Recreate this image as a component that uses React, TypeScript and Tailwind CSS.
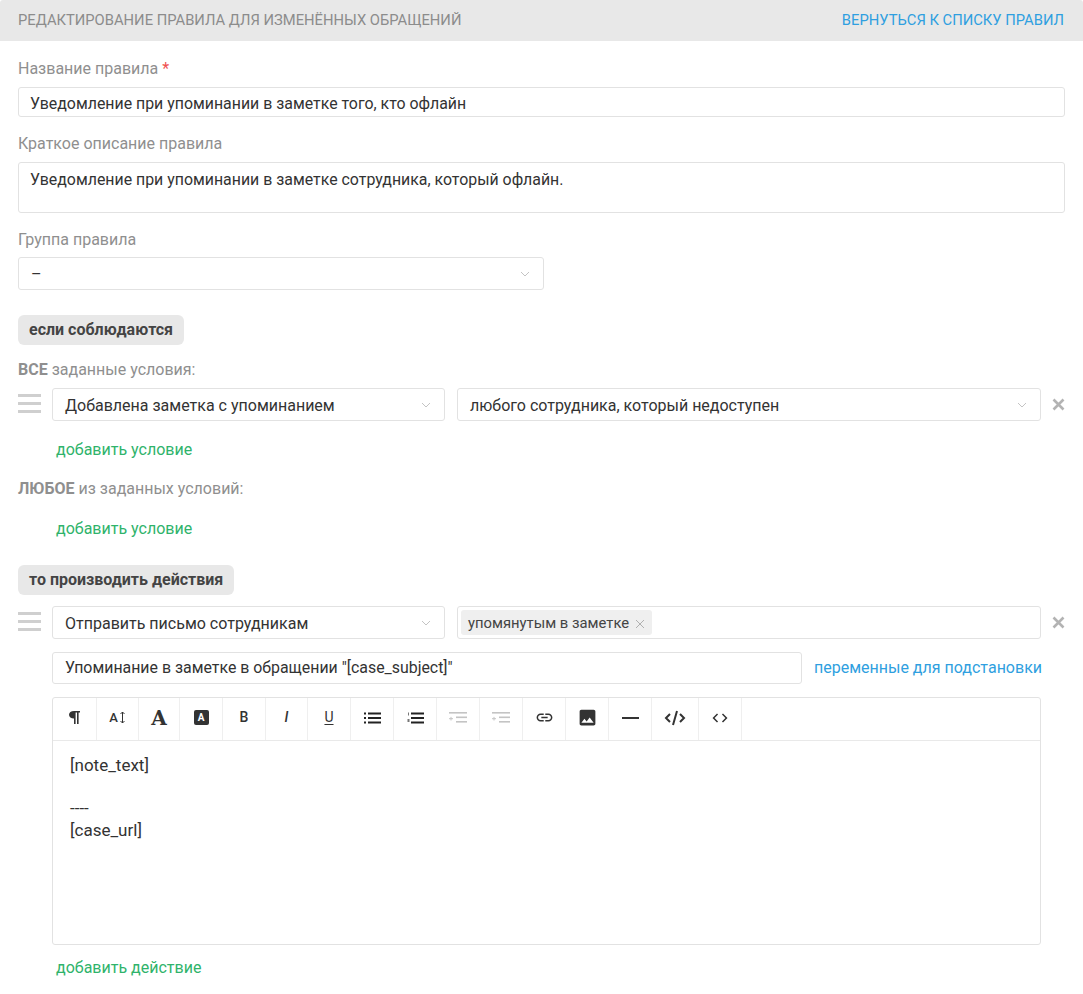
import { ReactNode } from 'react'
import { MdLink, MdImage, MdCode } from 'react-icons/md'

const font = { fontFamily: 'Roboto, sans-serif' }

function Chevron() {
  return (
    <svg width="10" height="6" viewBox="0 0 10 6" fill="none" className="shrink-0">
      <path d="M1 1l4 4 4-4" stroke="#c4c4c4" strokeWidth="1" />
    </svg>
  )
}

function Select({ value, className = '' }: { value: string; className?: string }) {
  return (
    <div className={`flex h-[33px] items-center justify-between rounded-[3px] border border-[#e2e2e2] pl-3 pr-[13px] text-[16px] text-[#333] ${className}`}>
      <span className="pt-[2px]">{value}</span>
      <Chevron />
    </div>
  )
}

function Handle() {
  return (
    <div className="flex w-[23px] shrink-0 flex-col gap-[5px] pt-[6px]">
      <div className="h-[3px] bg-[#cfcfcf]" />
      <div className="h-[3px] bg-[#cfcfcf]" />
      <div className="h-[3px] bg-[#cfcfcf]" />
    </div>
  )
}

function Close() {
  return (
    <svg width="13" height="13" viewBox="0 0 13 13" className="ml-[11px] mt-[10px] shrink-0">
      <path d="M1.5 1.5l10 10M11.5 1.5l-10 10" stroke="#b3b3b3" strokeWidth="2.6" />
    </svg>
  )
}

function Pill({ children }: { children: ReactNode }) {
  return (
    <div className="inline-flex h-[30px] items-center rounded-[6px] bg-[#e8e8e8] px-[11px] text-[16px] font-bold text-[#444]">
      {children}
    </div>
  )
}

function ToolButton({ children, className = 'w-[43px]' }: { children: ReactNode; className?: string }) {
  return (
    <div className={`flex h-full items-center justify-center border-r border-[#efefef] pb-[3px] text-[#333] ${className}`}>
      {children}
    </div>
  )
}

function AddLink({ children }: { children: ReactNode }) {
  return <div className="pl-[38px] text-[16px] leading-[20px] text-[#2fb36b]">{children}</div>
}

function IndentIcon() {
  return (
    <svg width="18" height="12" viewBox="0 0 18 12" fill="#c4c4c4">
      <rect x="0" y="0" width="18" height="1.6" />
      <rect x="7" y="4.5" width="11" height="1.6" />
      <rect x="7" y="9" width="11" height="1.6" />
      <path d="M0 6.7h4M2 4.9v3.6" stroke="#c4c4c4" strokeWidth="1" />
    </svg>
  )
}

export default function App() {
  return (
    <div className="h-[994px] w-[1083px] overflow-hidden bg-white" style={font}>
      <div className="flex h-[41px] items-center justify-between rounded-t-[3px] bg-[#e8e8e8] pl-[18px] pr-[19px] text-[14.75px]">
        <span className="text-[#8c8c8c]">РЕДАКТИРОВАНИЕ ПРАВИЛА ДЛЯ ИЗМЕНЁННЫХ ОБРАЩЕНИЙ</span>
        <span className="text-[#2f9fe0]">ВЕРНУТЬСЯ К СПИСКУ ПРАВИЛ</span>
      </div>

      <div className="pl-[18px] pr-[18px]">
        <div className="pt-[18px] text-[16px] leading-[20px] text-[#8f8f8f]">
          Название правила <span className="text-[#f05050]">*</span>
        </div>
        <div className="mt-[8px] flex h-[30px] items-center rounded-[3px] border border-[#e2e2e2] pl-[11px] pt-[4px] text-[15.9px] text-[#333]">
          Уведомление при упоминании в заметке того, кто офлайн
        </div>

        <div className="mt-[17px] text-[16px] leading-[20px] text-[#8f8f8f]">Краткое описание правила</div>
        <div className="mt-[8px] h-[51px] rounded-[3px] border border-[#e2e2e2] pl-[11px] pt-[7px] text-[15.9px] leading-[20px] text-[#333]">
          Уведомление при упоминании в заметке сотрудника, который офлайн.
        </div>

        <div className="mt-[17px] text-[16px] leading-[20px] text-[#8f8f8f]">Группа правила</div>
        <Select value="–" className="mt-[7px] w-[526px]" />

        <div className="mt-[25px]">
          <Pill>если соблюдаются</Pill>
        </div>

        <div className="mt-[15px] text-[16px] leading-[20px] text-[#8f8f8f]">
          <b className="font-bold">ВСЕ</b> заданные условия:
        </div>
        <div className="mt-[8px] flex">
          <Handle />
          <Select value="Добавлена заметка с упоминанием" className="ml-[11px] w-[393px]" />
          <Select value="любого сотрудника, который недоступен" className="ml-[12px] w-[584px]" />
          <Close />
        </div>
        <div className="mt-[19px]">
          <AddLink>добавить условие</AddLink>
        </div>

        <div className="mt-[19px] text-[16px] leading-[20px] text-[#8f8f8f]">
          <b className="font-bold">ЛЮБОЕ</b> из заданных условий:
        </div>
        <div className="mt-[20px]">
          <AddLink>добавить условие</AddLink>
        </div>

        <div className="mt-[26px]">
          <Pill>то производить действия</Pill>
        </div>

        <div className="mt-[11px] flex">
          <Handle />
          <Select value="Отправить письмо сотрудникам" className="ml-[11px] w-[393px]" />
          <div className="ml-[12px] flex h-[33px] w-[584px] items-center rounded-[3px] border border-[#e2e2e2] pl-[3px] text-[14.8px] text-[#444]">
            <div className="flex h-[25px] items-center gap-[6px] rounded-[3px] bg-[#efefef] pl-[7px] pr-[7px] pt-[2px]">
              упомянутым в заметке
              <svg width="10" height="10" viewBox="0 0 10 10">
                <path d="M1 1l8 8M9 1l-8 8" stroke="#b0b0b0" strokeWidth="1" />
              </svg>
            </div>
          </div>
          <Close />
        </div>

        <div className="ml-[34px] mt-[13px] flex items-center">
          <div className="flex h-[32px] w-[750px] items-center rounded-[3px] border border-[#e2e2e2] pl-3 text-[15.9px] text-[#333]">
            Упоминание в заметке в обращении "[case_subject]"
          </div>
          <span className="ml-[12px] text-[16px] text-[#2f9fe0]">переменные для подстановки</span>
        </div>

        <div className="ml-[34px] mt-[13px] h-[248px] w-[989px] rounded-[3px] border border-[#e2e2e2]">
          <div className="flex h-[43px] border-b border-[#e9e9e9]">
            <ToolButton className="w-[44px]">
              <svg width="11" height="13" viewBox="0 0 11 13" fill="#333">
                <path d="M5 0h6v1.6H9.6V13H8V1.6H6.6V13H5V7.4C2 7.4 0 6 0 3.7S2 0 5 0z" />
              </svg>
            </ToolButton>
            <ToolButton className="w-[42px]">
              <span className="flex items-center text-[13px] font-medium">
                A
                <svg width="7" height="13" viewBox="0 0 7 13" className="ml-[1px]">
                  <path d="M3.5 1v11M1.5 3l2-2 2 2M1.5 10l2 2 2-2" stroke="#333" strokeWidth="1" fill="none" />
                </svg>
              </span>
            </ToolButton>
            <ToolButton className="w-[41px]">
              <span className="text-[20px] font-bold leading-none" style={{ fontFamily: '"DejaVu Serif", serif' }}>A</span>
            </ToolButton>
            <ToolButton>
              <span className="flex h-[15px] w-[15px] items-center justify-center rounded-[2px] bg-[#333] text-[10px] font-bold text-white">A</span>
            </ToolButton>
            <ToolButton><span className="text-[14px] font-medium">B</span></ToolButton>
            <ToolButton className="w-[42px]"><span className="text-[14px] font-medium italic">I</span></ToolButton>
            <ToolButton><span className="text-[14px] underline underline-offset-2">U</span></ToolButton>
            <ToolButton>
              <svg width="17" height="12" viewBox="0 0 17 12" fill="#222">
                <rect x="0" y="0.5" width="2" height="2" />
                <rect x="0" y="5" width="2" height="2" />
                <rect x="0" y="9.5" width="2" height="2" />
                <rect x="4" y="0.5" width="13" height="2" />
                <rect x="4" y="5" width="13" height="2" />
                <rect x="4" y="9.5" width="13" height="2" />
              </svg>
            </ToolButton>
            <ToolButton>
              <svg width="17" height="12" viewBox="0 0 17 12" fill="#222">
                <rect x="1" y="0.5" width="1" height="3" fill="#777" />
                <rect x="0.5" y="7" width="2" height="3" fill="#777" />
                <rect x="4" y="0.5" width="13" height="2" />
                <rect x="4" y="5" width="13" height="2" />
                <rect x="4" y="9.5" width="13" height="2" />
              </svg>
            </ToolButton>
            <ToolButton><IndentIcon /></ToolButton>
            <ToolButton><IndentIcon /></ToolButton>
            <ToolButton><MdLink size={19} /></ToolButton>
            <ToolButton><MdImage size={21} /></ToolButton>
            <ToolButton><div className="h-[2px] w-[17px] bg-[#333]" /></ToolButton>
            <ToolButton className="w-[47px]">
              <svg width="22" height="16" viewBox="0 0 22 16" fill="none" stroke="#333" strokeWidth="2">
                <path d="M6 4L2 8l4 4M16 4l4 4-4 4M13 1L9 15" />
              </svg>
            </ToolButton>
            <ToolButton><MdCode size={18} /></ToolButton>
          </div>
          <div className="pl-[17px] pt-[14px] text-[17px] leading-[21.5px] text-[#333]">
            <div>[note_text]</div>
            <div className="h-[21.5px]" />
            <div>----</div>
            <div>[case_url]</div>
          </div>
        </div>

        <div className="mt-[13px]">
          <AddLink>добавить действие</AddLink>
        </div>
      </div>
    </div>
  )
}
